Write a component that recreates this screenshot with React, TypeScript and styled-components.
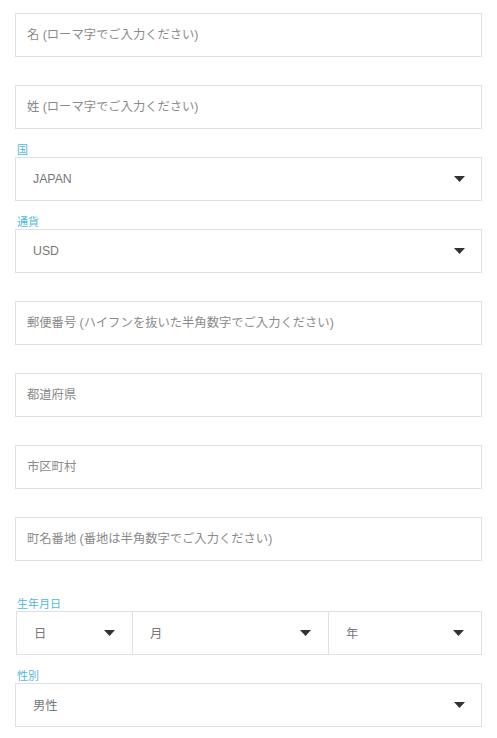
import React from "react"
import styled, { createGlobalStyle } from "styled-components"

const GlobalStyle = createGlobalStyle`
  html, body {
    margin: 0;
    padding: 0;
    background: #fff;
  }
  body {
    font-family: "Liberation Sans", "Noto Sans CJK JP", sans-serif;
  }
  * {
    box-sizing: border-box;
  }
`

const textFields = [
  '郵便番号 (ハイフンを抜いた半角数字でご入力ください)',
  '都道府県',
  '市区町村',
  '町名番地 (番地は半角数字でご入力ください)',
]

const Arrow: React.FC = () => <ArrowSvg width="11" height="6" viewBox="0 0 11 6">
  <polygon points="0,0 11,0 5.5,6" fill="#333" />
</ArrowSvg>

const ArrowSvg = styled.svg`
  flex: none;
  display: block;
`

const Select: React.FC<{ value: string }> = ({ value }) => {
  return <SelectBox>
    <SelectValue>{value}</SelectValue>
    <Arrow />
  </SelectBox>
}

const App: React.FC<{}> = () => {
  return <Page>
    <GlobalStyle />
    <Form>
      <Group first>
        <TextInput placeholder="名 (ローマ字でご入力ください)" />
      </Group>
      <Group>
        <TextInput placeholder="姓 (ローマ字でご入力ください)" />
      </Group>
      <Group labeled>
        <Label>国</Label>
        <Select value="JAPAN" />
      </Group>
      <Group labeled>
        <Label>通貨</Label>
        <Select value="USD" />
      </Group>
      {textFields.map((text, index) => <Group key={index}>
        <TextInput placeholder={text} />
      </Group>)}
      <Group labeled wide>
        <Label>生年月日</Label>
        <DateRow>
          <DateCell>
            <SelectValue>日</SelectValue>
            <Arrow />
          </DateCell>
          <DateCell>
            <SelectValue>月</SelectValue>
            <Arrow />
          </DateCell>
          <DateCell>
            <SelectValue>年</SelectValue>
            <Arrow />
          </DateCell>
        </DateRow>
      </Group>
      <Group labeled>
        <Label>性別</Label>
        <Select value="男性" />
      </Group>
    </Form>
  </Page>
}

const Page = styled.div`
  width: 497px;
  min-height: 738px;
  padding: 0 15px 10px;
`

const Form = styled.form`
  display: flex;
  flex-direction: column;
  width: 467px;
`

const Group = styled.div<{ first?: boolean; labeled?: boolean; wide?: boolean }>`
  display: flex;
  flex-direction: column;
  margin-top: ${p => p.first ? 13 : p.wide ? 38 : p.labeled ? 16 : 28}px;
`

const Label = styled.label`
  display: block;
  height: 12px;
  line-height: 12px;
  font-size: 11px;
  color: #4fb8dc;
  padding-left: 2px;
  margin-top: -1px;
  margin-bottom: 1px;
`

const TextInput = styled.input`
  display: block;
  width: 100%;
  height: 44px;
  border: 1px solid #e1e1e1;
  border-radius: 0;
  padding: 0 11px;
  font: 12.3px "Liberation Sans", "Noto Sans CJK JP", sans-serif;
  color: #555;
  outline: none;
  background: #fff;
  &::placeholder {
    color: #8a8a8a;
  }
`

const SelectBox = styled.div`
  display: flex;
  align-items: center;
  justify-content: space-between;
  height: 44px;
  border: 1px solid #e1e1e1;
  padding: 0 16px 0 17px;
  background: #fff;
`

const SelectValue = styled.span`
  font-size: 12.3px;
  color: #777;
`

const DateRow = styled.div`
  display: grid;
  grid-template-columns: 115px 196px 1fr;
  height: 44px;
  margin-left: 1px;
  border: 1px solid #e1e1e1;
`

const DateCell = styled.div`
  display: flex;
  align-items: center;
  justify-content: space-between;
  padding: 0 17px 0 17px;
  & + & {
    border-left: 1px solid #e1e1e1;
  }
`

export default App
